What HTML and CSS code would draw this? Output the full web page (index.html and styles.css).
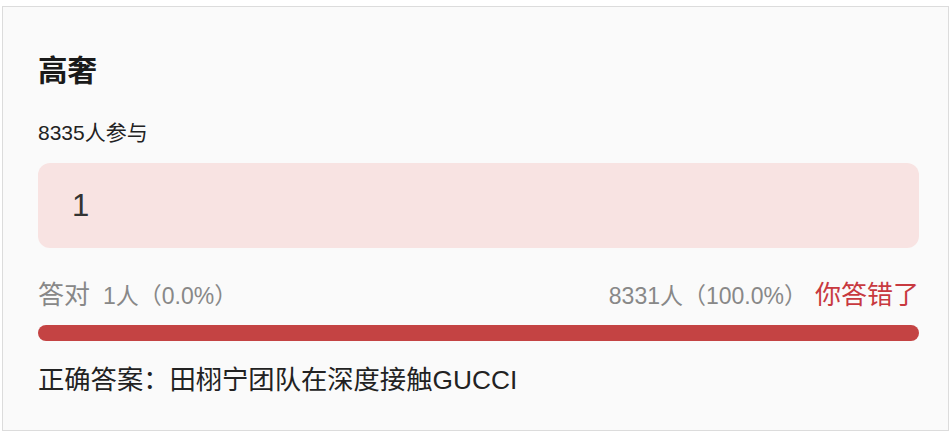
FILE: index.html
```html
<!DOCTYPE html>
<html lang="zh-CN">
<head>
<meta charset="utf-8">
<link rel="stylesheet" href="styles.css">
</head>
<body>
<div class="card">
  <h1 class="title">高奢</h1>
  <div class="count">8335人参与</div>
  <div class="option">1</div>
  <div class="stats">
    <div class="left"><span class="label">答对</span><span class="num">1人（0.0%）</span></div>
    <div class="right"><span class="num">8331人（100.0%）</span><span class="wrong">你答错了</span></div>
  </div>
  <div class="bar"></div>
  <div class="answer">正确答案：田栩宁团队在深度接触GUCCI</div>
</div>
</body>
</html>
```
FILE: styles.css
```css
html, body {
  margin: 0;
  padding: 0;
  background: #ffffff;
}
body {
  font-family: "Liberation Sans", Arial, "Noto Sans CJK SC", sans-serif;
  color: #222;
}
.card {
  box-sizing: border-box;
  margin: 6px 0 0 2px;
  width: 947px;
  height: 425px;
  border: 1px solid #dcdcdc;
  background: #fafafa;
  padding: 46px 29px 0 35px;
}
.title {
  margin: 0;
  font-size: 29.5px;
  line-height: 36px;
  font-weight: bold;
  color: #1a1a1a;
}
.count {
  margin-top: 32px;
  font-size: 21px;
  line-height: 24px;
  color: #222;
}
.option {
  margin-top: 18px;
  height: 85px;
  border-radius: 12px;
  background: #f8e3e2;
  display: flex;
  align-items: center;
  padding-left: 34px;
  font-size: 31px;
  color: #333;
}
.stats {
  margin-top: 32px;
  height: 30px;
  display: flex;
  justify-content: space-between;
  align-items: center;
  line-height: 30px;
}
.left, .right {
  display: flex;
  align-items: baseline;
}
.label {
  font-size: 26px;
  color: #888888;
  margin-right: 13px;
}
.num {
  font-size: 23px;
  color: #888888;
}
.wrong {
  font-size: 26px;
  color: #c8393f;
  margin-left: 8px;
}
.bar {
  margin-top: 15px;
  height: 16px;
  border-radius: 8px;
  background: #c44343;
}
.answer {
  margin-top: 24px;
  font-size: 26.3px;
  line-height: 30px;
  color: #222;
}
```
